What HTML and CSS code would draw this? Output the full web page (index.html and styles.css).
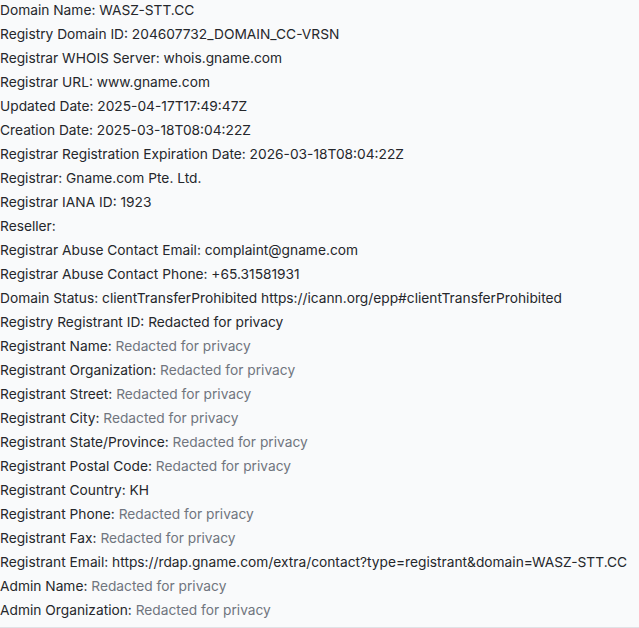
FILE: index.html
```html
<!DOCTYPE html>
<html>
<head>
<meta charset="utf-8">
<link rel="stylesheet" href="styles.css">
</head>
<body>
<div class="panel">
  <div class="list">
    <div class="row">Domain Name: WASZ-STT.CC</div>
    <div class="row">Registry Domain ID: 204607732_DOMAIN_CC-VRSN</div>
    <div class="row">Registrar WHOIS Server: whois.gname.com</div>
    <div class="row">Registrar URL: www.gname.com</div>
    <div class="row">Updated Date: 2025-04-17T17:49:47Z</div>
    <div class="row">Creation Date: 2025-03-18T08:04:22Z</div>
    <div class="row">Registrar Registration Expiration Date: 2026-03-18T08:04:22Z</div>
    <div class="row">Registrar: Gname.com Pte. Ltd.</div>
    <div class="row">Registrar IANA ID: 1923</div>
    <div class="row">Reseller:</div>
    <div class="row">Registrar Abuse Contact Email: complaint@gname.com</div>
    <div class="row">Registrar Abuse Contact Phone: +65.31581931</div>
    <div class="row">Domain Status: clientTransferProhibited https://icann.org/epp#clientTransferProhibited</div>
    <div class="row">Registry Registrant ID: Redacted for privacy</div>
    <div class="row">Registrant Name: <span class="muted">Redacted for privacy</span></div>
    <div class="row">Registrant Organization: <span class="muted">Redacted for privacy</span></div>
    <div class="row">Registrant Street: <span class="muted">Redacted for privacy</span></div>
    <div class="row">Registrant City: <span class="muted">Redacted for privacy</span></div>
    <div class="row">Registrant State/Province: <span class="muted">Redacted for privacy</span></div>
    <div class="row">Registrant Postal Code: <span class="muted">Redacted for privacy</span></div>
    <div class="row">Registrant Country: KH</div>
    <div class="row">Registrant Phone: <span class="muted">Redacted for privacy</span></div>
    <div class="row">Registrant Fax: <span class="muted">Redacted for privacy</span></div>
    <div class="row">Registrant Email: https://rdap.gname.com/extra/contact?type=registrant&amp;domain=WASZ-STT.CC</div>
    <div class="row">Admin Name: <span class="muted">Redacted for privacy</span></div>
    <div class="row">Admin Organization: <span class="muted">Redacted for privacy</span></div>
  </div>
</div>
</body>
</html>
```
FILE: styles.css
```css
html, body {
  margin: 0;
  padding: 0;
  background: #f9fafb;
}
.panel {
  height: 627px;
  overflow: hidden;
  border-bottom: 1px solid #e0e2e6;
  background: #f9fafb;
}
.list {
  margin-top: -2px;
  font-family: Inter, "Noto Sans", sans-serif;
  font-size: 13.75px;
  line-height: 24px;
  color: #25272b;
}
.row {
  white-space: nowrap;
}
.muted {
  color: #70757e;
}
```
